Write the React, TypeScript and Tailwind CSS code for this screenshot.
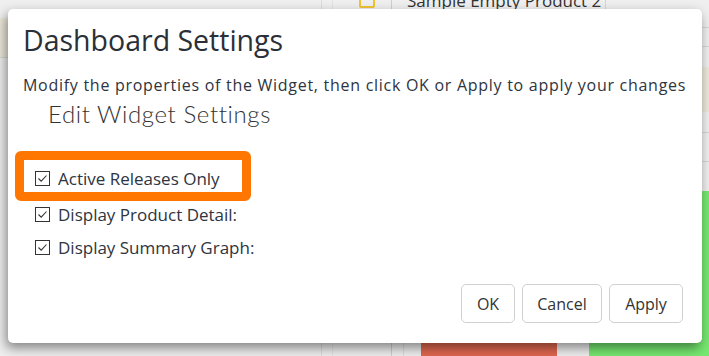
import React from "react";

function Check() {
  return (
    <svg width="15" height="15" viewBox="0 0 15 15" className="shrink-0">
      <rect x="0.5" y="0.5" width="14" height="14" fill="#fff" stroke="#333" strokeWidth="1" />
      <path d="M3.5 7.5 L6.2 10.2 L11.5 4.5" fill="none" stroke="#333" strokeWidth="1.1" />
    </svg>
  );
}

function Row({ label }: { label: string }) {
  return (
    <div className="flex items-center gap-[8px] h-[33px]">
      <Check />
      <span className="text-[17px] text-[#2e3440]">{label}</span>
    </div>
  );
}

function Background() {
  return (
    <div className="flex w-[709px] h-[356px] bg-[#efefef]">
      <div className="w-[322px] flex flex-col border-r border-[#dcdcdc]">
        <div className="h-[18px]" />
        <div className="h-[40px] bg-[#ece8db] border-b border-[#d8d8d8]" />
      </div>
      <div className="w-[11px] border-r border-[#e2e2e2]" />
      <div className="w-[59px] flex flex-col pl-[26px] border-r border-[#cfcfcf]">
        <div className="-mt-[6px] w-[16px] h-[14px] border-2 border-[#f1c232] rounded-[2px]" />
      </div>
      <div className="w-[197px] flex flex-col justify-between">
        <div className="-mt-[9px] pl-[15px] text-[17px] text-[#333] leading-[20px] whitespace-nowrap">
          Sample Empty Product 2
        </div>
        <div className="h-[56px] flex">
          <div className="w-[12px] border-r border-[#dcdcdc]" />
          <div className="ml-[17px] w-[136px] bg-[#e0674f]" />
        </div>
      </div>
      <div className="flex-1 flex flex-col">
        <div className="h-[28px] border-b border-[#d6d6d6] ml-[16px] border-l" />
        <div className="h-[19px] border-b border-[#d6d6d6]" />
        <div className="h-[20px]" />
        <div className="h-[45px] bg-[#ece8db]" />
        <div className="h-[21px] border-b border-[#d6d6d6]" />
        <div className="h-[29px] border-b border-[#d6d6d6]" />
        <div className="h-[29px]" />
        <div className="flex-1 bg-[#76e870]" />
      </div>
    </div>
  );
}

export default function App() {
  return (
    <div
      className="relative w-[709px] h-[356px] overflow-hidden"
      style={{ fontFamily: '"Open Sans", "Noto Sans", sans-serif' }}
    >
      <Background />

      {/* modal */}
      <div className="absolute left-[8px] top-[9px] w-[694px] h-[334px] bg-white rounded-[5px] shadow-[-2px_5px_12px_rgba(0,0,0,0.45)] flex flex-col">
        <div className="px-[15px] pt-[11px]">
          <h1 className="text-[28.5px] leading-[40px] text-[#2b2f38]">Dashboard Settings</h1>
        </div>
        <div className="px-[15px] pt-[14px]">
          <p className="text-[16px] leading-[22px] tracking-[0.72px] text-[#2e3440] whitespace-nowrap">
            Modify the properties of the Widget, then click OK or Apply to apply your changes
          </p>
          <h2
            className="pl-[25px] pt-[3px] text-[24px] leading-[30px] font-light text-[#333] tracking-[0.6px]"
            style={{ fontFamily: 'Lato, "Open Sans", sans-serif' }}
          >
            Edit Widget Settings
          </h2>
        </div>
        <div className="pl-[7px] pt-[22px] flex flex-col">
          <div className="w-[236px] h-[50px] border-[9px] border-[#ff7700] rounded-[6px] flex items-center pl-[11px] pt-[5px]">
            <Row label="Active Releases Only" />
          </div>
          <div className="pl-[20px] -mt-[3px] flex flex-col">
            <Row label="Display Product Detail:" />
            <Row label="Display Summary Graph:" />
          </div>
        </div>
        <div className="mt-auto mb-[20px] pr-[19px] flex justify-end gap-[7px]">
          <button className="w-[54px] h-[39px] border border-[#d0d0d0] rounded-[5px] text-[16px] text-[#333]">OK</button>
          <button className="w-[80px] h-[39px] border border-[#d0d0d0] rounded-[5px] text-[16px] text-[#333]">Cancel</button>
          <button className="w-[74px] h-[39px] border border-[#d0d0d0] rounded-[5px] text-[16px] text-[#333]">Apply</button>
        </div>
      </div>
    </div>
  );
}
